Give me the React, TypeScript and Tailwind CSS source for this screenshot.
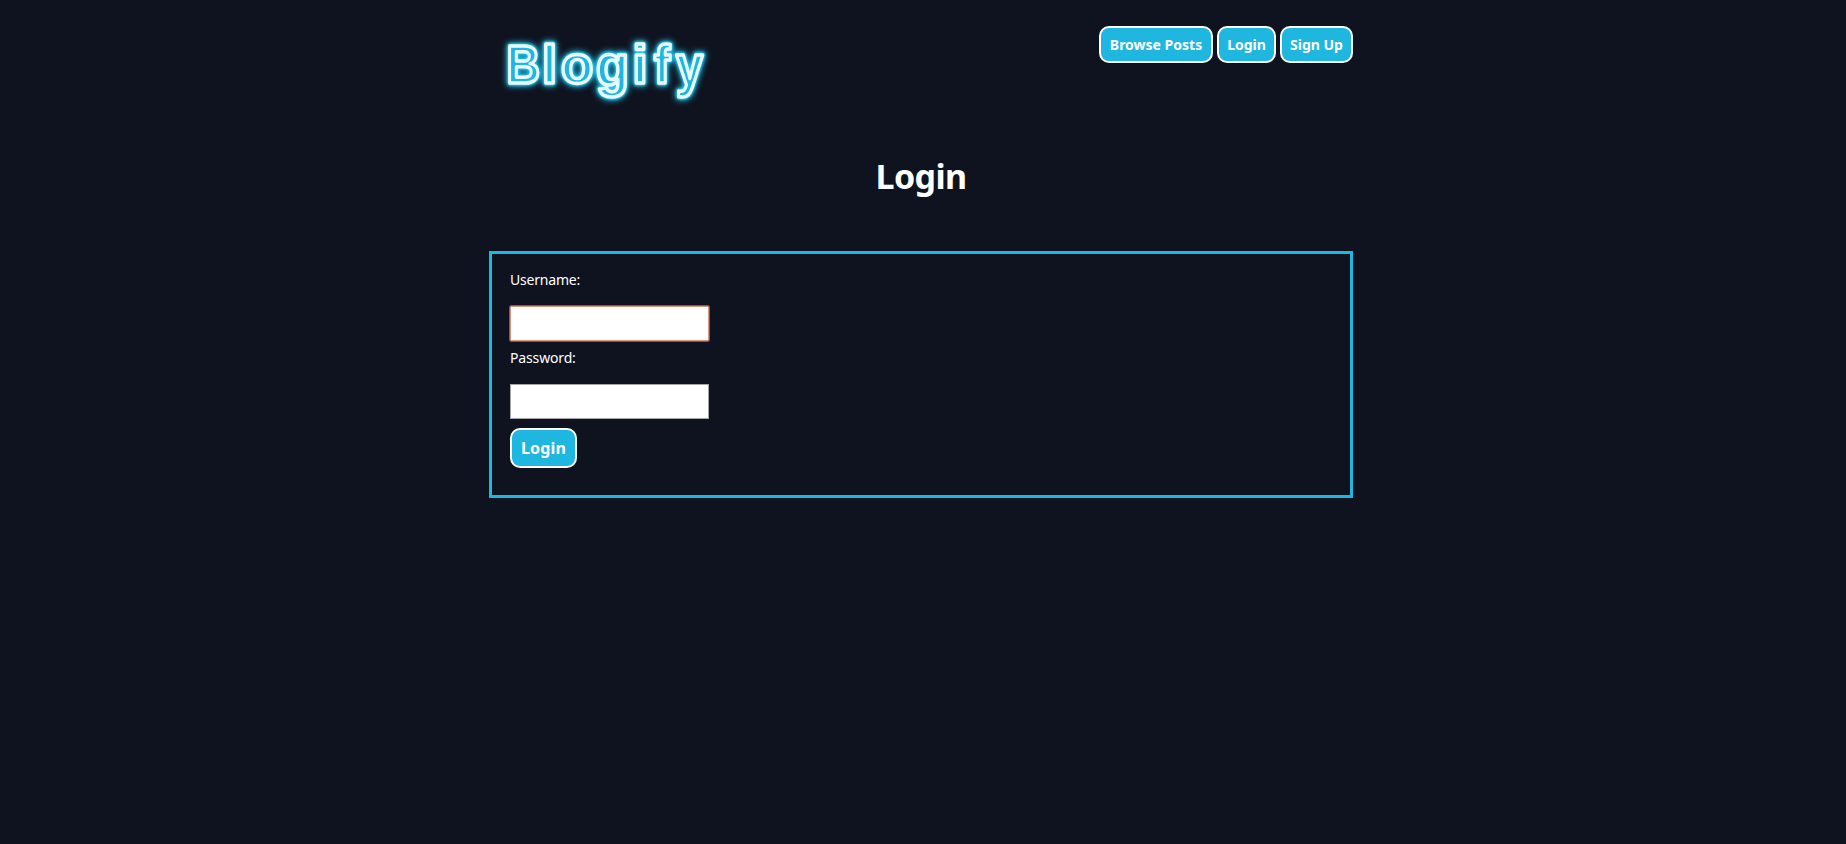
const navItems = [
  { label: 'Browse Posts', box: 'w-[114px]' },
  { label: 'Login', box: 'w-[59px]' },
  { label: 'Sign Up', box: 'w-[73px]' },
];

const logoLetters = [
  { char: 'B', x: 17.5, y: 65.5, scaleX: 0.86, scaleY: 1 },
  { char: 'l', x: 53, y: 65.5, scaleX: 1, scaleY: 1 },
  { char: 'o', x: 72, y: 65.5, scaleX: 0.98, scaleY: 0.97 },
  { char: 'g', x: 107, y: 67.5, scaleX: 1, scaleY: 1.06 },
  { char: 'i', x: 143.5, y: 65.5, scaleX: 1, scaleY: 1 },
  { char: 'f', x: 165, y: 65.5, scaleX: 0.9, scaleY: 1 },
  { char: 'y', x: 187, y: 67.5, scaleX: 0.9, scaleY: 1.06 },
];

function LogoLetters() {
  return logoLetters.map(({ char, x, y, scaleX, scaleY }) => (
    <text key={char} transform={`translate(${x} ${y}) scale(${scaleX} ${scaleY})`}>{char}</text>
  ));
}

function Logo() {
  return (
    <svg width="240" height="100" viewBox="0 0 240 100" role="img" aria-label="Blogify" className="block overflow-visible">
      <g className="text-[54px] font-bold" fontFamily="Liberation Sans, sans-serif" strokeLinejoin="round">
        <g fill="#22c4ee" stroke="#22c4ee" strokeWidth="6" className="blur-[3px]"><LogoLetters /></g>
        <g fill="#1badd8" stroke="#25c6ee" strokeWidth="5" className="blur-[1px]"><LogoLetters /></g>
        <g fill="#1fb6df" stroke="#e9fbff" strokeWidth="3.4"><LogoLetters /></g>
      </g>
    </svg>
  );
}

export default function App() {
  return (
    <div className="min-h-[844px] bg-[#0f131f] font-['Noto_Sans','Open_Sans',sans-serif] text-white">
      <div className="ml-[489px] w-[864px]">
        <header className="flex h-[140px] items-start justify-between">
          <a href="#" className="mt-[17px]"><Logo /></a>
          <nav className="mt-[26px] flex gap-1">
            {navItems.map((item) => (
              <a key={item.label} href="#" className={`flex h-[37px] items-center justify-center rounded-[10px] border-2 border-white bg-[#1fb6df] text-sm font-bold whitespace-nowrap ${item.box}`}>
                {item.label}
              </a>
            ))}
          </nav>
        </header>
        <h1 className="flex h-[72px] items-center justify-center text-[34px] font-bold tracking-[-0.6px]">Login</h1>
        <form className="mt-[39px] flex h-[247px] flex-col items-start border-3 border-[#1fb6df] px-[18px]" onSubmit={(e) => e.preventDefault()}>
          <label htmlFor="username" className="mt-[15px] h-[37px] text-sm leading-[22px] tracking-[-0.2px]">Username:</label>
          <input id="username" className="h-[35px] w-[199px] rounded-[1px] border border-[#e0967c] bg-white px-2 text-black outline-1 outline-[#a04d32]" />
          <label htmlFor="password" className="mt-[6px] h-[37px] text-sm leading-[22px] tracking-[-0.15px]">Password:</label>
          <input id="password" type="password" className="h-[35px] w-[199px] border border-[#a5a5a5] bg-white px-2 text-black outline-none" />
          <button className="mt-[9px] h-10 w-[67px] rounded-[10px] border-2 border-white bg-[#1fb6df] text-base font-bold tracking-[0.2px]">Login</button>
        </form>
      </div>
    </div>
  );
}
